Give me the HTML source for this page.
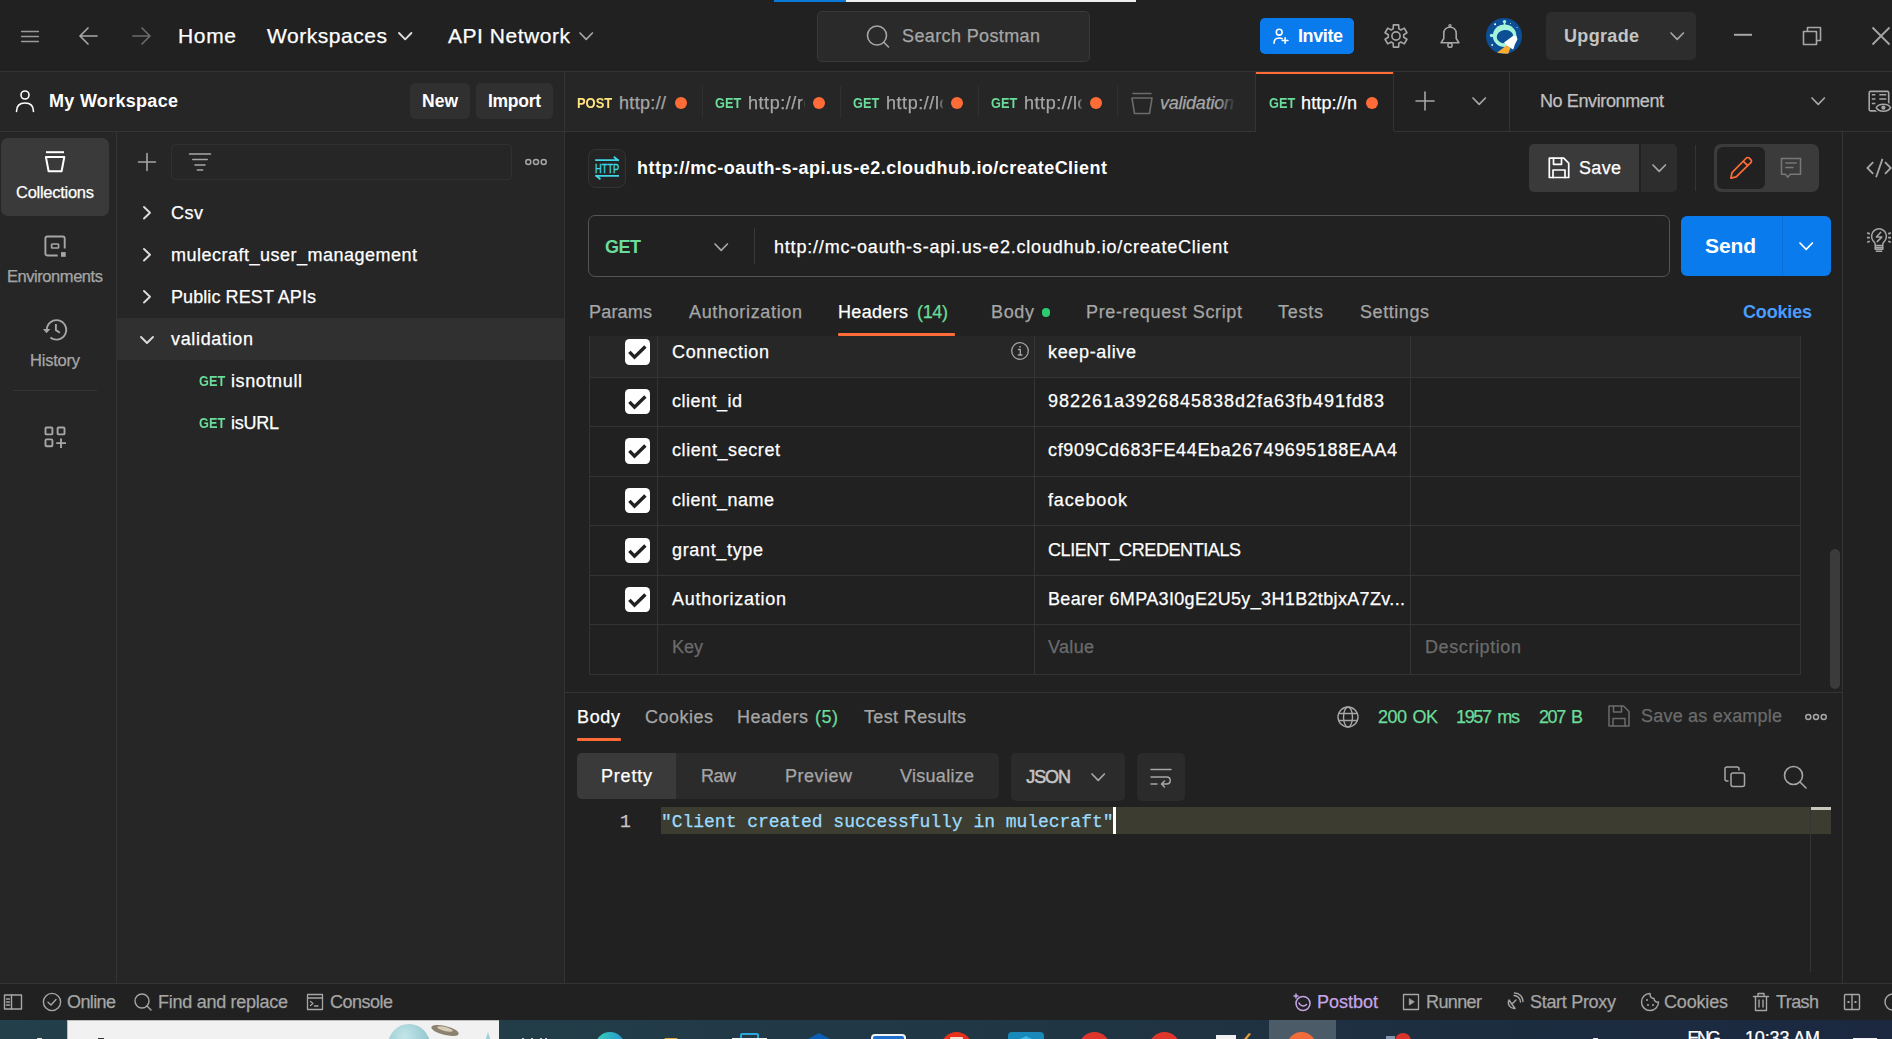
<!DOCTYPE html>
<html lang="en"><head><meta charset="utf-8"><title>Postman</title><style>
html,body{margin:0;padding:0;background:#212121;}
body{width:1892px;height:1039px;overflow:hidden;position:relative;font-family:'Liberation Sans',sans-serif;}
.b{position:absolute;box-sizing:border-box;display:block;}
.t{position:absolute;white-space:pre;line-height:30px;height:30px;-webkit-text-stroke:0.25px currentColor;}
</style></head><body>
<div class="b" style="left:0px;top:0px;width:1892px;height:71px;background:#212121;"></div>
<div class="b" style="left:0px;top:72px;width:1255px;height:59px;background:#262626;"></div>
<div class="b" style="left:0px;top:131px;width:564px;height:853px;background:#262626;"></div>
<div class="b" style="left:1394px;top:72px;width:498px;height:59px;background:#212121;"></div>
<div class="b" style="left:0px;top:71px;width:1892px;height:1px;background:#343434;"></div>
<div class="b" style="left:0px;top:131px;width:1892px;height:1px;background:#343434;"></div>
<div class="b" style="left:116px;top:132px;width:1px;height:851px;background:#343434;"></div>
<div class="b" style="left:564px;top:72px;width:1px;height:911px;background:#343434;"></div>
<div class="b" style="left:774px;top:0px;width:72px;height:2px;background:#0b79d8;"></div>
<div class="b" style="left:846px;top:0px;width:290px;height:2px;background:#ededed;"></div>
<svg class="b" style="left:19px;top:28px;" width="22" height="16" viewBox="0 0 22 16" fill="none" stroke-linecap="round" stroke-linejoin="round"><path d="M2.6 3.5H19.4M2.6 8.5H19.4M2.6 13.5H19.4" stroke="#9a9a9a" stroke-width="1.5"/></svg>
<svg class="b" style="left:77px;top:26px;" width="22" height="20" viewBox="0 0 22 20" fill="none" stroke-linecap="round" stroke-linejoin="round"><path d="M20 10H3M11 2L3 10L11 18" stroke="#a6a6a6" stroke-width="1.7"/></svg>
<svg class="b" style="left:131px;top:26px;" width="22" height="20" viewBox="0 0 22 20" fill="none" stroke-linecap="round" stroke-linejoin="round"><path d="M2 10H19M11 2L19 10L11 18" stroke="#6b6b6b" stroke-width="1.7"/></svg>
<span class="t" style="left:178px;top:20.5px;font-size:21px;color:#fff;letter-spacing:0.656px;">Home</span>
<span class="t" style="left:267px;top:20.5px;font-size:21px;color:#fff;letter-spacing:0.538px;">Workspaces</span>
<svg class="b" style="left:397.3px;top:31.35px;" width="16.4" height="10.3" viewBox="0 0 16.4 10.3" fill="none" stroke-linecap="round" stroke-linejoin="round"><path d="M2 2 L8.2 8.3 L14.4 2" stroke="#dcdcdc" stroke-width="1.9"/></svg>
<span class="t" style="left:448px;top:20.5px;font-size:21px;color:#fff;letter-spacing:0.530px;">API Network</span>
<svg class="b" style="left:578.3px;top:31.35px;" width="16.4" height="10.3" viewBox="0 0 16.4 10.3" fill="none" stroke-linecap="round" stroke-linejoin="round"><path d="M2 2 L8.2 8.3 L14.4 2" stroke="#a6a6a6" stroke-width="1.7"/></svg>
<div class="b" style="left:817px;top:11px;width:273px;height:51px;background:#2a2a2a;border:1px solid #3a3a3a;border-radius:5px;"></div>
<svg class="b" style="left:864px;top:23px;" width="28" height="28" viewBox="0 0 28 28" fill="none" stroke-linecap="round" stroke-linejoin="round"><circle cx="13" cy="12.5" r="9.5" stroke="#a6a6a6" stroke-width="1.6"/><path d="M20 19.5L24.5 24" stroke="#a6a6a6" stroke-width="1.6"/></svg>
<span class="t" style="left:902px;top:20.5px;font-size:18px;color:#a6a6a6;letter-spacing:0.379px;">Search Postman</span>
<div class="b" style="left:1260px;top:18px;width:94px;height:36px;background:#097bed;border-radius:5px;"></div>
<svg class="b" style="left:1271px;top:26px;" width="20" height="20" viewBox="0 0 20 20" fill="none" stroke-linecap="round" stroke-linejoin="round"><circle cx="8.200" cy="6.200" r="2.900" stroke="#fff" stroke-width="1.600"/><path d="M3 17.200C3 13.600 5 12 8.200 12C9.500 12 10.300 12.200 11.200 12.700M14.100 11.700V17.300M11.300 14.500H16.900" stroke="#fff" stroke-width="1.600"/></svg>
<span class="t" style="left:1298px;top:20.5px;font-size:18px;color:#fff;font-weight:700;-webkit-text-stroke:0;letter-spacing:-0.403px;">Invite</span>
<svg class="b" style="left:1384px;top:24px;" width="24" height="24" viewBox="0 0 24 24" fill="none" stroke-linecap="round" stroke-linejoin="round"><circle cx="12" cy="12" r="4.1" stroke="#a6a6a6" stroke-width="1.6"/><path d="M9.20 4.72L9.34 0.91L14.66 0.91L14.80 4.72L16.91 5.94L20.27 4.15L22.93 8.76L19.70 10.78L19.70 13.22L22.93 15.24L20.27 19.85L16.91 18.06L14.80 19.28L14.66 23.09L9.34 23.09L9.20 19.28L7.09 18.06L3.73 19.85L1.07 15.24L4.30 13.22L4.30 10.78L1.07 8.76L3.73 4.15L7.09 5.94Z" stroke="#a6a6a6" stroke-width="1.6" stroke-linejoin="round"/></svg>
<svg class="b" style="left:1438px;top:22px;" width="24" height="28" viewBox="0 0 24 28" fill="none" stroke-linecap="round" stroke-linejoin="round"><path d="M3.100 20.800L5.800 16.500V11.500C5.800 7.500 8.500 5.200 12 5.200C15.500 5.200 18.200 7.500 18.200 11.500V16.500L20.900 20.800Z" stroke="#a6a6a6" stroke-width="1.600"/><circle cx="12" cy="3.700" r="1.100" stroke="#a6a6a6" stroke-width="1.300"/><circle cx="12" cy="23.200" r="2.100" stroke="#a6a6a6" stroke-width="1.500"/></svg>
<svg class="b" style="left:1486px;top:18px;" width="36" height="36" viewBox="0 0 36 36" fill="none" stroke-linecap="round" stroke-linejoin="round"><defs><clipPath id="avc"><circle cx="18" cy="18" r="18"/></clipPath></defs><g clip-path="url(#avc)" stroke="none"><rect width="36" height="36" fill="#0c4f96"/><circle cx="18.5" cy="3.6" r="1.7" fill="#a6f3dc"/><rect x="17.7" y="4" width="1.6" height="3" fill="#a6f3dc"/><circle cx="5.6" cy="17.5" r="1.8" fill="#a6f3dc"/><ellipse cx="18.6" cy="17.8" rx="11.8" ry="11.3" fill="#a6f3dc"/><ellipse cx="19" cy="18.6" rx="8.3" ry="6.6" fill="#0c4f96" transform="rotate(-8 19 18.6)"/><path d="M20.7 27.2L24.5 29.9L22.1 36L11 34.8Z" fill="#ffad2c"/><path d="M18 24.5L27.5 17.5L30.4 18L31.5 21.300L28.8 26.700L27.2 31.500L24.500 29.900L20.700 27.200Z" fill="#fff"/><circle cx="9.1" cy="6.2" r="1" fill="#fff"/><circle cx="6.2" cy="26.9" r="0.9" fill="#fff"/><circle cx="24.5" cy="5.500" r="0.500" fill="#cfe"/><circle cx="31" cy="9.500" r="0.500" fill="#cfe"/></g></svg>
<div class="b" style="left:1546px;top:12px;width:150px;height:48px;background:#2d2d2d;border-radius:5px;"></div>
<span class="t" style="left:1564px;top:20.5px;font-size:18px;color:#c4c4c4;font-weight:700;-webkit-text-stroke:0;letter-spacing:0.331px;">Upgrade</span>
<svg class="b" style="left:1668.8px;top:31.35px;" width="16.4" height="10.3" viewBox="0 0 16.4 10.3" fill="none" stroke-linecap="round" stroke-linejoin="round"><path d="M2 2 L8.2 8.3 L14.4 2" stroke="#a6a6a6" stroke-width="1.7"/></svg>
<svg class="b" style="left:1731px;top:31px;" width="24" height="8" viewBox="0 0 24 8" fill="none" stroke-linecap="round" stroke-linejoin="round"><path d="M3 3.800H21" stroke="#a6a6a6" stroke-width="2" stroke-linecap="butt"/></svg>
<svg class="b" style="left:1801px;top:25px;" width="22" height="22" viewBox="0 0 22 22" fill="none" stroke-linecap="round" stroke-linejoin="round"><path d="M6.5 6V2.5H19.5V15.5H16" stroke="#a6a6a6" stroke-width="1.6"/><rect x="2.5" y="6.5" width="13" height="13" stroke="#a6a6a6" stroke-width="1.6"/></svg>
<svg class="b" style="left:1871px;top:26px;" width="22" height="20" viewBox="0 0 22 20" fill="none" stroke-linecap="round" stroke-linejoin="round"><path d="M1.500 1.500L18.500 18.500M18.500 1.500L1.500 18.500" stroke="#a6a6a6" stroke-width="1.800" stroke-linecap="butt"/></svg>
<svg class="b" style="left:14px;top:88px;" width="22" height="26" viewBox="0 0 22 26" fill="none" stroke-linecap="round" stroke-linejoin="round"><circle cx="11" cy="7" r="4" stroke="#fff" stroke-width="1.6"/><path d="M2.5 23.5C2.5 17.5 6 15 11 15C16 15 19.5 17.5 19.5 23.5" stroke="#fff" stroke-width="1.6"/></svg>
<span class="t" style="left:49px;top:85.5px;font-size:18px;color:#fff;font-weight:700;-webkit-text-stroke:0;letter-spacing:0.298px;">My Workspace</span>
<div class="b" style="left:410px;top:83px;width:60px;height:36px;background:#303030;border-radius:5px;"></div>
<span class="t" style="left:422px;top:86.1px;font-size:17.5px;color:#fff;font-weight:700;-webkit-text-stroke:0;letter-spacing:0.008px;">New</span>
<div class="b" style="left:476px;top:83px;width:77px;height:36px;background:#303030;border-radius:5px;"></div>
<span class="t" style="left:488px;top:86.1px;font-size:17.5px;color:#fff;font-weight:700;-webkit-text-stroke:0;letter-spacing:-0.291px;">Import</span>
<span class="t" style="left:577px;top:88.1px;font-size:14.4px;color:#ffe47e;font-weight:700;-webkit-text-stroke:0;transform:scaleX(0.8982);transform-origin:0 50%;">POST</span>
<span class="t" style="left:619px;top:87.5px;font-size:18px;color:#a6a6a6;letter-spacing:0.328px;">http://</span>
<div class="b" style="left:674.8px;top:96.8px;width:12.4px;height:12.4px;background:#ff6c37;border-radius:50%;"></div>
<div class="b" style="left:702px;top:86px;width:1px;height:32px;background:#303030;"></div>
<span class="t" style="left:715px;top:88.1px;font-size:14.4px;color:#6bdd9a;font-weight:700;-webkit-text-stroke:0;transform:scaleX(0.8853);transform-origin:0 50%;">GET</span>
<span class="t" style="left:748px;top:87.5px;font-size:18px;color:#a6a6a6;letter-spacing:0.55px;display:block;overflow:hidden;width:57px;-webkit-mask-image:linear-gradient(90deg,#000 93%,transparent 102%);mask-image:linear-gradient(90deg,#000 93%,transparent 102%);">http://re</span>
<div class="b" style="left:812.8px;top:96.8px;width:12.4px;height:12.4px;background:#ff6c37;border-radius:50%;"></div>
<div class="b" style="left:840px;top:86px;width:1px;height:32px;background:#303030;"></div>
<span class="t" style="left:853px;top:88.1px;font-size:14.4px;color:#6bdd9a;font-weight:700;-webkit-text-stroke:0;transform:scaleX(0.8853);transform-origin:0 50%;">GET</span>
<span class="t" style="left:886px;top:87.5px;font-size:18px;color:#a6a6a6;letter-spacing:0.55px;display:block;overflow:hidden;width:57px;-webkit-mask-image:linear-gradient(90deg,#000 93%,transparent 102%);mask-image:linear-gradient(90deg,#000 93%,transparent 102%);">http://lo</span>
<div class="b" style="left:950.8px;top:96.8px;width:12.4px;height:12.4px;background:#ff6c37;border-radius:50%;"></div>
<div class="b" style="left:978px;top:86px;width:1px;height:32px;background:#303030;"></div>
<span class="t" style="left:991px;top:88.1px;font-size:14.4px;color:#6bdd9a;font-weight:700;-webkit-text-stroke:0;transform:scaleX(0.8853);transform-origin:0 50%;">GET</span>
<span class="t" style="left:1024px;top:87.5px;font-size:18px;color:#a6a6a6;letter-spacing:0.55px;display:block;overflow:hidden;width:58px;-webkit-mask-image:linear-gradient(90deg,#000 93%,transparent 102%);mask-image:linear-gradient(90deg,#000 93%,transparent 102%);">http://lo</span>
<div class="b" style="left:1089.8px;top:96.8px;width:12.4px;height:12.4px;background:#ff6c37;border-radius:50%;"></div>
<div class="b" style="left:1117px;top:86px;width:1px;height:32px;background:#303030;"></div>
<svg class="b" style="left:1129px;top:90px;" width="26" height="26" viewBox="0 0 26 26" fill="none" stroke-linecap="round" stroke-linejoin="round"><path d="M4 3.5H22M3 8H23L20.5 23.5H5.5Z" stroke="#6b6b6b" stroke-width="1.6"/></svg>
<span class="t" style="left:1160px;top:87.5px;font-size:18px;color:#a6a6a6;font-style:italic;letter-spacing:-0.229px;">validation</span>
<div class="b" style="left:1218px;top:88px;width:18px;height:30px;background:linear-gradient(90deg,rgba(38,38,38,0),#262626)"></div>
<div class="b" style="left:1256px;top:72px;width:138px;height:60px;background:#212121;"></div>
<div class="b" style="left:1256px;top:72px;width:137px;height:2px;background:#ff6c37;"></div>
<div class="b" style="left:1255px;top:72px;width:1px;height:59px;background:#343434;"></div>
<div class="b" style="left:1393px;top:72px;width:1px;height:59px;background:#343434;"></div>
<span class="t" style="left:1268.8px;top:88.1px;font-size:14.4px;color:#6bdd9a;font-weight:700;-webkit-text-stroke:0;transform:scaleX(0.8853);transform-origin:0 50%;">GET</span>
<span class="t" style="left:1301px;top:87.5px;font-size:18px;color:#fff;letter-spacing:0.136px;">http://n</span>
<div class="b" style="left:1365.8px;top:96.8px;width:12.4px;height:12.4px;background:#ff6c37;border-radius:50%;"></div>
<svg class="b" style="left:1415px;top:91px;" width="20" height="20" viewBox="0 0 20 20" fill="none" stroke-linecap="round" stroke-linejoin="round"><path d="M10 1V19M1 10H19" stroke="#a6a6a6" stroke-width="1.6"/></svg>
<svg class="b" style="left:1470.8px;top:96.35px;" width="16.4" height="10.3" viewBox="0 0 16.4 10.3" fill="none" stroke-linecap="round" stroke-linejoin="round"><path d="M2 2 L8.2 8.3 L14.4 2" stroke="#a6a6a6" stroke-width="1.7"/></svg>
<div class="b" style="left:1509px;top:72px;width:1px;height:59px;background:#343434;"></div>
<span class="t" style="left:1540px;top:85.5px;font-size:18px;color:#c0c0c0;letter-spacing:-0.389px;">No Environment</span>
<svg class="b" style="left:1809.8px;top:96.35px;" width="16.4" height="10.3" viewBox="0 0 16.4 10.3" fill="none" stroke-linecap="round" stroke-linejoin="round"><path d="M2 2 L8.2 8.3 L14.4 2" stroke="#a6a6a6" stroke-width="1.7"/></svg>
<svg class="b" style="left:1866px;top:88px;" width="28" height="28" viewBox="0 0 28 28" fill="none" stroke-linecap="round" stroke-linejoin="round"><rect x="3.200" y="3.400" width="19.500" height="19.500" rx="1.300" stroke="#a6a6a6" stroke-width="1.600"/><path d="M5.800 6.800H9.400M13.300 6.800H20.300M5.800 11.100H9.400M13.300 11.100H20.300M5.800 15.400H9.400" stroke="#a6a6a6" stroke-width="1.500" stroke-linecap="butt"/><path d="M10.200 19.700C12.500 15 22.300 15 24.600 19.700C22.300 24.400 12.500 24.400 10.200 19.700Z" fill="#212121" stroke="#212121" stroke-width="4"/><path d="M10.200 19.700C12.500 15 22.300 15 24.600 19.700C22.300 24.400 12.500 24.400 10.200 19.700Z" stroke="#a6a6a6" stroke-width="1.500"/><circle cx="17.400" cy="19.700" r="2.100" fill="#a6a6a6" stroke="none"/></svg>
<div class="b" style="left:1px;top:138px;width:108px;height:78px;background:#3a3a3a;border-radius:7px;"></div>
<svg class="b" style="left:42px;top:149px;" width="26" height="26" viewBox="0 0 26 26" fill="none" stroke-linecap="round" stroke-linejoin="round"><path d="M3.900 8H22.300L19.600 22.300H6.600Z" stroke="#fff" stroke-width="2"/><path d="M4 3.200H22" stroke="#fff" stroke-width="2" stroke-linecap="butt"/></svg>
<span class="t" style="left:16px;top:177.2px;font-size:16.5px;color:#fff;letter-spacing:-0.272px;">Collections</span>
<svg class="b" style="left:42px;top:233px;" width="26" height="26" viewBox="0 0 26 26" fill="none" stroke-linecap="round" stroke-linejoin="round"><path d="M22.700 15.600V5.500Q22.700 3.500 20.700 3.500H5.400Q3.400 3.500 3.400 5.500V20.500Q3.400 22.500 5.400 22.500H15.700" stroke="#a6a6a6" stroke-width="1.900" stroke-linecap="butt"/><rect x="9.600" y="11" width="7" height="4" rx="0.800" stroke="#a6a6a6" stroke-width="1.700"/><rect x="19" y="19.100" width="4.700" height="4.700" fill="#a6a6a6" stroke="none"/></svg>
<span class="t" style="left:7px;top:261.2px;font-size:16.5px;color:#a6a6a6;letter-spacing:-0.445px;">Environments</span>
<svg class="b" style="left:42px;top:317px;" width="26" height="26" viewBox="0 0 26 26" fill="none" stroke-linecap="round" stroke-linejoin="round"><path d="M4.800 12.900A9.700 9.700 0 1 1 8.400 20.400" stroke="#a6a6a6" stroke-width="1.900" stroke-linecap="butt"/><path d="M1 12.100H8.400L4.500 16.300Z" fill="#a6a6a6" stroke="none"/><path d="M13.900 7.100V13.100L17.900 15.700" stroke="#a6a6a6" stroke-width="1.900" stroke-linecap="butt"/></svg>
<span class="t" style="left:30px;top:345.2px;font-size:16.5px;color:#a6a6a6;letter-spacing:-0.224px;">History</span>
<div class="b" style="left:13px;top:390px;width:84px;height:1px;background:#343434;"></div>
<svg class="b" style="left:43px;top:426px;" width="26" height="26" viewBox="0 0 26 26" fill="none" stroke-linecap="round" stroke-linejoin="round"><rect x="2.500" y="1.500" width="6.900" height="6.900" rx="1" stroke="#a6a6a6" stroke-width="1.900"/><rect x="14.600" y="1.500" width="6.900" height="6.900" rx="1" stroke="#a6a6a6" stroke-width="1.900"/><rect x="2.500" y="13.400" width="6.900" height="6.900" rx="1" stroke="#a6a6a6" stroke-width="1.900"/><path d="M18 12.400V22M13.200 17.100H23" stroke="#a6a6a6" stroke-width="1.900" stroke-linecap="butt"/></svg>
<svg class="b" style="left:137px;top:152px;" width="20" height="20" viewBox="0 0 20 20" fill="none" stroke-linecap="round" stroke-linejoin="round"><path d="M10 1.5V18.5M1.5 10H18.5" stroke="#a6a6a6" stroke-width="1.6"/></svg>
<div class="b" style="left:171px;top:144px;width:341px;height:36px;border:1px solid #303030;border-radius:4px;"></div>
<svg class="b" style="left:188px;top:152px;" width="24" height="20" viewBox="0 0 24 20" fill="none" stroke-linecap="round" stroke-linejoin="round"><path d="M1.5 2H22.5M4.8 7.5H19.2M7 13H17M9.3 18H14.7" stroke="#a6a6a6" stroke-width="1.6"/></svg>
<svg class="b" style="left:524px;top:157px;" width="24" height="10" viewBox="0 0 24 10" fill="none" stroke-linecap="round" stroke-linejoin="round"><circle cx="4.3" cy="5" r="2.5" stroke="#a6a6a6" stroke-width="1.5"/><circle cx="12" cy="5" r="2.5" stroke="#a6a6a6" stroke-width="1.5"/><circle cx="19.7" cy="5" r="2.5" stroke="#a6a6a6" stroke-width="1.5"/></svg>
<div class="b" style="left:117px;top:318px;width:447px;height:42px;background:#303030;"></div>
<svg class="b" style="left:142.3px;top:205.25px;" width="10" height="15.5" viewBox="0 0 10 15.5" fill="none" stroke-linecap="round" stroke-linejoin="round"><path d="M2 2 L8 7.75 L2 13.5" stroke="#dcdcdc" stroke-width="1.9"/></svg>
<span class="t" style="left:171px;top:198.0px;font-size:18px;color:#fff;letter-spacing:0.500px;">Csv</span>
<svg class="b" style="left:142.3px;top:247.25px;" width="10" height="15.5" viewBox="0 0 10 15.5" fill="none" stroke-linecap="round" stroke-linejoin="round"><path d="M2 2 L8 7.75 L2 13.5" stroke="#dcdcdc" stroke-width="1.9"/></svg>
<span class="t" style="left:171px;top:240.0px;font-size:18px;color:#fff;letter-spacing:0.495px;">mulecraft_user_management</span>
<svg class="b" style="left:142.3px;top:289.25px;" width="10" height="15.5" viewBox="0 0 10 15.5" fill="none" stroke-linecap="round" stroke-linejoin="round"><path d="M2 2 L8 7.75 L2 13.5" stroke="#dcdcdc" stroke-width="1.9"/></svg>
<span class="t" style="left:171px;top:282.0px;font-size:18px;color:#fff;letter-spacing:0.084px;">Public REST APIs</span>
<svg class="b" style="left:139.0px;top:334.5px;" width="16" height="10" viewBox="0 0 16 10" fill="none" stroke-linecap="round" stroke-linejoin="round"><path d="M2 2 L8.0 8 L14 2" stroke="#dcdcdc" stroke-width="1.9"/></svg>
<span class="t" style="left:171px;top:324.0px;font-size:18px;color:#fff;letter-spacing:0.660px;">validation</span>
<span class="t" style="left:199px;top:365.9px;font-size:14.4px;color:#6bdd9a;font-weight:700;-webkit-text-stroke:0;transform:scaleX(0.8853);transform-origin:0 50%;">GET</span>
<span class="t" style="left:231px;top:366.0px;font-size:18px;color:#fff;letter-spacing:0.619px;">isnotnull</span>
<span class="t" style="left:199px;top:407.9px;font-size:14.4px;color:#6bdd9a;font-weight:700;-webkit-text-stroke:0;transform:scaleX(0.8853);transform-origin:0 50%;">GET</span>
<span class="t" style="left:231px;top:408.0px;font-size:18px;color:#fff;letter-spacing:-0.254px;">isURL</span>
<div class="b" style="left:588px;top:148.6px;width:38px;height:39px;background:#242424;border:1px solid #343434;border-radius:8px;"></div>
<svg class="b" style="left:592px;top:153px;" width="31" height="30" viewBox="0 0 31 30" fill="none" stroke-linecap="round" stroke-linejoin="round"><path d="M3.200 7.200H27M26.600 7.800L21.800 3.800M27 22.800H3.200M3.600 22.200L8.400 26.200" stroke="#3fd6ea" stroke-width="1.800" stroke-linecap="butt" stroke-linejoin="miter"/><text x="3" y="19.800" font-family="Liberation Sans, sans-serif" font-size="13" fill="#3fd6ea" stroke="#3fd6ea" stroke-width="0.400" textLength="24.300" lengthAdjust="spacingAndGlyphs">HTTP</text></svg>
<span class="t" style="left:637px;top:153.0px;font-size:18px;color:#fff;font-weight:700;-webkit-text-stroke:0;letter-spacing:0.470px;">http://mc-oauth-s-api.us-e2.cloudhub.io/createClient</span>
<div class="b" style="left:1529px;top:144px;width:110px;height:48px;background:#3a3a3a;border-radius:5px 0 0 5px;"></div>
<div class="b" style="left:1641px;top:144px;width:36px;height:48px;background:#2d2d2d;border-radius:0 5px 5px 0;"></div>
<svg class="b" style="left:1546px;top:155px;" width="26" height="26" viewBox="0 0 26 26" fill="none" stroke-linecap="round" stroke-linejoin="round"><path d="M3.300 3.200H17.700L22.700 8.200V22.500H3.300Z" stroke="#fff" stroke-width="1.700"/><path d="M7.500 3.200V9.300H15.500V3.200M7 22.500V15H19V22.500" stroke="#fff" stroke-width="1.700"/></svg>
<span class="t" style="left:1579px;top:153.0px;font-size:18px;color:#fff;letter-spacing:0.323px;">Save</span>
<svg class="b" style="left:1650.8px;top:162.85px;" width="16.4" height="10.3" viewBox="0 0 16.4 10.3" fill="none" stroke-linecap="round" stroke-linejoin="round"><path d="M2 2 L8.2 8.3 L14.4 2" stroke="#a6a6a6" stroke-width="1.7"/></svg>
<div class="b" style="left:1695px;top:145px;width:1px;height:46px;background:#343434;"></div>
<div class="b" style="left:1714px;top:144px;width:105px;height:48px;background:#3b3b3b;border-radius:7px;"></div>
<div class="b" style="left:1717px;top:147px;width:48px;height:42px;background:#212121;border-radius:6px;"></div>
<svg class="b" style="left:1728px;top:155px;" width="26" height="26" viewBox="0 0 26 26" fill="none" stroke-linecap="round" stroke-linejoin="round"><path d="M2.800 23.100L4 17.700L17.900 3.500C18.900 2.300 20.300 2.200 21.300 3.200L22.800 4.700C23.800 5.700 23.700 7 22.750 7.700L8.200 21.800ZM15.800 6.900L19.200 10" stroke="#ff6c37" stroke-width="1.700"/></svg>
<svg class="b" style="left:1778px;top:156px;" width="26" height="26" viewBox="0 0 26 26" fill="none" stroke-linecap="round" stroke-linejoin="round"><path d="M3.500 2.500H22.500V18.200H12.300L9.800 21L7.300 18.200H3.500Z" stroke="#777" stroke-width="1.500" stroke-linejoin="miter"/><path d="M7.300 7H18.700M7.300 11.400H15.700" stroke="#777" stroke-width="1.500" stroke-linecap="butt"/></svg>
<div class="b" style="left:1842px;top:132px;width:1px;height:851px;background:#343434;"></div>
<svg class="b" style="left:1866px;top:157px;" width="26" height="22" viewBox="0 0 26 22" fill="none" stroke-linecap="round" stroke-linejoin="round"><path d="M7.200 5.100L1.400 11L7.200 16.900M16.500 1.900L10.100 20.200M19 5.100L24.800 11L19 16.900" stroke="#a6a6a6" stroke-width="1.800" stroke-linecap="butt" stroke-linejoin="miter"/></svg>
<div class="b" style="left:588px;top:215px;width:1082px;height:62px;background:#212121;border:1px solid #555;border-radius:7px;"></div>
<span class="t" style="left:605px;top:231.7px;font-size:18px;color:#6bdd9a;font-weight:700;-webkit-text-stroke:0;letter-spacing:-0.508px;">GET</span>
<svg class="b" style="left:713.0px;top:241.65px;" width="16.4" height="10.3" viewBox="0 0 16.4 10.3" fill="none" stroke-linecap="round" stroke-linejoin="round"><path d="M2 2 L8.2 8.3 L14.4 2" stroke="#a6a6a6" stroke-width="1.7"/></svg>
<div class="b" style="left:754px;top:228px;width:1px;height:36px;background:#3a3a3a;"></div>
<span class="t" style="left:774px;top:231.7px;font-size:18px;color:#fff;letter-spacing:0.800px;">http://mc-oauth-s-api.us-e2.cloudhub.io/createClient</span>
<div class="b" style="left:1681px;top:216px;width:150px;height:60px;background:#097bed;border-radius:6px;"></div>
<span class="t" style="left:1705px;top:230.6px;font-size:21px;color:#fff;font-weight:700;-webkit-text-stroke:0;letter-spacing:-0.115px;">Send</span>
<div class="b" style="left:1782px;top:216px;width:1px;height:60px;background:#0a6fd6;"></div>
<svg class="b" style="left:1798.3px;top:240.85px;" width="16.4" height="10.3" viewBox="0 0 16.4 10.3" fill="none" stroke-linecap="round" stroke-linejoin="round"><path d="M2 2 L8.2 8.3 L14.4 2" stroke="#fff" stroke-width="1.7"/></svg>
<svg class="b" style="left:1864px;top:226px;" width="28" height="30" viewBox="0 0 28 30" fill="none" stroke-linecap="round" stroke-linejoin="round"><path d="M11.200 19.500V18.200C11.200 16.600 9.600 15.600 8.800 14.300A7.400 7.400 0 1 1 21.200 14.300C20.400 15.600 18.800 16.600 18.800 18.200V19.500M11.200 19.500H18.800M11.200 19.500V23.300H18.800V19.500M11.200 21.500H18.800M12.300 25.200H17.700" stroke="#a6a6a6" stroke-width="1.500"/><path d="M16.700 6.300L12.400 10.900L17.800 11.100L13.200 15.600" stroke="#a6a6a6" stroke-width="1.500"/><path d="M3.200 6.900L5.800 7.900M3 11.700H5.900M3.200 16.300L5.800 15.300M26.800 6.900L24.200 7.900M27 11.700H24.100M26.800 16.300L24.200 15.300" stroke="#a6a6a6" stroke-width="1.700" stroke-linecap="butt"/></svg>
<span class="t" style="left:589px;top:296.7px;font-size:18px;color:#a6a6a6;letter-spacing:0.197px;">Params</span>
<span class="t" style="left:689px;top:296.7px;font-size:18px;color:#a6a6a6;letter-spacing:0.660px;">Authorization</span>
<span class="t" style="left:838px;top:296.7px;font-size:18px;color:#fff;letter-spacing:0.326px;">Headers</span>
<span class="t" style="left:917px;top:296.7px;font-size:18px;color:#6bdd9a;letter-spacing:-0.339px;">(14)</span>
<div class="b" style="left:838px;top:333px;width:117px;height:3px;background:#ff6c37;border-radius:1px;"></div>
<span class="t" style="left:991px;top:296.7px;font-size:18px;color:#a6a6a6;letter-spacing:0.656px;">Body</span>
<div class="b" style="left:1041.7px;top:308.2px;width:8.6px;height:8.6px;background:#2ecc71;border-radius:50%;"></div>
<span class="t" style="left:1086px;top:296.7px;font-size:18px;color:#a6a6a6;letter-spacing:0.643px;">Pre-request Script</span>
<span class="t" style="left:1278px;top:296.7px;font-size:18px;color:#a6a6a6;letter-spacing:0.746px;">Tests</span>
<span class="t" style="left:1360px;top:296.7px;font-size:18px;color:#a6a6a6;letter-spacing:0.565px;">Settings</span>
<span class="t" style="left:1743px;top:296.7px;font-size:18px;color:#4a9dff;font-weight:700;-webkit-text-stroke:0;letter-spacing:-0.172px;">Cookies</span>
<div class="b" style="left:589px;top:336px;width:1212px;height:41px;background:#272727;"></div>
<div class="b" style="left:589px;top:336px;width:1px;height:339px;background:#343434;"></div>
<div class="b" style="left:589px;top:377px;width:1212px;height:1px;background:#343434;"></div>
<div class="b" style="left:589px;top:426px;width:1212px;height:1px;background:#343434;"></div>
<div class="b" style="left:589px;top:476px;width:1212px;height:1px;background:#343434;"></div>
<div class="b" style="left:589px;top:525px;width:1212px;height:1px;background:#343434;"></div>
<div class="b" style="left:589px;top:575px;width:1212px;height:1px;background:#343434;"></div>
<div class="b" style="left:589px;top:624px;width:1212px;height:1px;background:#343434;"></div>
<div class="b" style="left:589px;top:674px;width:1212px;height:1px;background:#343434;"></div>
<div class="b" style="left:657px;top:336px;width:1px;height:339px;background:#343434;"></div>
<div class="b" style="left:1034px;top:336px;width:1px;height:339px;background:#343434;"></div>
<div class="b" style="left:1410px;top:336px;width:1px;height:339px;background:#343434;"></div>
<div class="b" style="left:1800px;top:336px;width:1px;height:339px;background:#343434;"></div>
<div class="b" style="left:624.6px;top:339.34999999999997px;width:25.8px;height:25.6px;background:#fff;border-radius:4.5px;"></div>
<svg class="b" style="left:624.6px;top:339.34999999999997px;" width="27" height="27" viewBox="0 0 27 27" fill="none" stroke-linecap="round" stroke-linejoin="round"><path d="M4.400 12.900L9.500 18.200L20.400 7.500" stroke="#212121" stroke-width="3.400" stroke-linecap="butt" stroke-linejoin="miter"/></svg>
<span class="t" style="left:672px;top:336.5px;font-size:18px;color:#fff;letter-spacing:0.658px;">Connection</span>
<span class="t" style="left:1048px;top:336.5px;font-size:18px;color:#fff;letter-spacing:0.661px;">keep-alive</span>
<div class="b" style="left:624.6px;top:388.59999999999997px;width:25.8px;height:25.6px;background:#fff;border-radius:4.5px;"></div>
<svg class="b" style="left:624.6px;top:388.59999999999997px;" width="27" height="27" viewBox="0 0 27 27" fill="none" stroke-linecap="round" stroke-linejoin="round"><path d="M4.400 12.900L9.500 18.200L20.400 7.500" stroke="#212121" stroke-width="3.400" stroke-linecap="butt" stroke-linejoin="miter"/></svg>
<span class="t" style="left:672px;top:385.75px;font-size:18px;color:#fff;letter-spacing:0.494px;">client_id</span>
<span class="t" style="left:1048px;top:385.75px;font-size:18px;color:#fff;letter-spacing:0.989px;">982261a3926845838d2fa63fb491fd83</span>
<div class="b" style="left:624.6px;top:438.09999999999997px;width:25.8px;height:25.6px;background:#fff;border-radius:4.5px;"></div>
<svg class="b" style="left:624.6px;top:438.09999999999997px;" width="27" height="27" viewBox="0 0 27 27" fill="none" stroke-linecap="round" stroke-linejoin="round"><path d="M4.400 12.900L9.500 18.200L20.400 7.500" stroke="#212121" stroke-width="3.400" stroke-linecap="butt" stroke-linejoin="miter"/></svg>
<span class="t" style="left:672px;top:435.25px;font-size:18px;color:#fff;letter-spacing:0.578px;">client_secret</span>
<span class="t" style="left:1048px;top:435.25px;font-size:18px;color:#fff;letter-spacing:0.668px;">cf909Cd683FE44Eba26749695188EAA4</span>
<div class="b" style="left:624.6px;top:487.59999999999997px;width:25.8px;height:25.6px;background:#fff;border-radius:4.5px;"></div>
<svg class="b" style="left:624.6px;top:487.59999999999997px;" width="27" height="27" viewBox="0 0 27 27" fill="none" stroke-linecap="round" stroke-linejoin="round"><path d="M4.400 12.900L9.500 18.200L20.400 7.500" stroke="#212121" stroke-width="3.400" stroke-linecap="butt" stroke-linejoin="miter"/></svg>
<span class="t" style="left:672px;top:484.75px;font-size:18px;color:#fff;letter-spacing:0.494px;">client_name</span>
<span class="t" style="left:1048px;top:484.75px;font-size:18px;color:#fff;letter-spacing:0.848px;">facebook</span>
<div class="b" style="left:624.6px;top:537.85px;width:25.8px;height:25.6px;background:#fff;border-radius:4.5px;"></div>
<svg class="b" style="left:624.6px;top:537.85px;" width="27" height="27" viewBox="0 0 27 27" fill="none" stroke-linecap="round" stroke-linejoin="round"><path d="M4.400 12.900L9.500 18.200L20.400 7.500" stroke="#212121" stroke-width="3.400" stroke-linecap="butt" stroke-linejoin="miter"/></svg>
<span class="t" style="left:672px;top:535.0px;font-size:18px;color:#fff;letter-spacing:0.660px;">grant_type</span>
<span class="t" style="left:1048px;top:535.0px;font-size:18px;color:#fff;letter-spacing:-0.415px;">CLIENT_CREDENTIALS</span>
<div class="b" style="left:624.6px;top:586.6px;width:25.8px;height:25.6px;background:#fff;border-radius:4.5px;"></div>
<svg class="b" style="left:624.6px;top:586.6px;" width="27" height="27" viewBox="0 0 27 27" fill="none" stroke-linecap="round" stroke-linejoin="round"><path d="M4.400 12.900L9.500 18.200L20.400 7.500" stroke="#212121" stroke-width="3.400" stroke-linecap="butt" stroke-linejoin="miter"/></svg>
<span class="t" style="left:672px;top:583.75px;font-size:18px;color:#fff;letter-spacing:0.743px;">Authorization</span>
<span class="t" style="left:1048px;top:583.75px;font-size:18px;color:#fff;letter-spacing:0.347px;">Bearer 6MPA3I0gE2U5y_3H1B2tbjxA7Zv...</span>
<svg class="b" style="left:1010px;top:341px;" width="20" height="20" viewBox="0 0 20 20" fill="none" stroke-linecap="round" stroke-linejoin="round"><circle cx="10" cy="10" r="8.300" stroke="#a6a6a6" stroke-width="1.3"/><path d="M8.500 8.500H10.300V14M8.300 14H12" stroke="#a6a6a6" stroke-width="1.3"/><circle cx="10" cy="5.800" r="0.900" fill="#a6a6a6" stroke="none"/></svg>
<span class="t" style="left:672px;top:632.3px;font-size:18px;color:#6b6b6b;letter-spacing:-0.016px;">Key</span>
<span class="t" style="left:1048px;top:632.3px;font-size:18px;color:#6b6b6b;letter-spacing:0.324px;">Value</span>
<span class="t" style="left:1425px;top:632.3px;font-size:18px;color:#6b6b6b;letter-spacing:0.595px;">Description</span>
<div class="b" style="left:1829.5px;top:549px;width:10px;height:139.5px;background:#3b3b3b;border-radius:5px;"></div>
<div class="b" style="left:565px;top:692px;width:1278px;height:1px;background:#343434;"></div>
<span class="t" style="left:577px;top:702.0px;font-size:18px;color:#fff;letter-spacing:0.656px;">Body</span>
<div class="b" style="left:577px;top:738px;width:44px;height:3px;background:#ff6c37;border-radius:1px;"></div>
<span class="t" style="left:645px;top:702.0px;font-size:18px;color:#a6a6a6;letter-spacing:0.495px;">Cookies</span>
<span class="t" style="left:737px;top:702.0px;font-size:18px;color:#a6a6a6;letter-spacing:0.492px;">Headers</span>
<span class="t" style="left:815px;top:702.0px;font-size:18px;color:#6bdd9a;letter-spacing:0.500px;">(5)</span>
<span class="t" style="left:864px;top:702.0px;font-size:18px;color:#a6a6a6;letter-spacing:0.359px;">Test Results</span>
<svg class="b" style="left:1336px;top:705px;" width="24" height="24" viewBox="0 0 24 24" fill="none" stroke-linecap="round" stroke-linejoin="round"><circle cx="12" cy="12" r="10" stroke="#a6a6a6" stroke-width="1.4"/><ellipse cx="12" cy="12" rx="4.500" ry="10" stroke="#a6a6a6" stroke-width="1.4"/><path d="M3 8.500H21M3 15.500H21" stroke="#a6a6a6" stroke-width="1.4"/></svg>
<span class="t" style="left:1378px;top:702.0px;font-size:18px;color:#6bdd9a;letter-spacing:-0.509px;word-spacing:1.5px;">200 OK</span>
<span class="t" style="left:1456px;top:702.0px;font-size:18px;color:#6bdd9a;letter-spacing:-1.341px;word-spacing:3px;">1957 ms</span>
<span class="t" style="left:1539px;top:702.0px;font-size:18px;color:#6bdd9a;letter-spacing:-1.387px;word-spacing:2.5px;">207 B</span>
<svg class="b" style="left:1607px;top:704px;" width="24" height="24" viewBox="0 0 24 24" fill="none" stroke-linecap="round" stroke-linejoin="round"><path d="M2 2H16.500L22 7.500V22H2Z" stroke="#6b6b6b" stroke-width="1.5"/><path d="M6.500 2V8H14.500V2M6 22V14.500H18V22" stroke="#6b6b6b" stroke-width="1.5"/></svg>
<span class="t" style="left:1641px;top:701.0px;font-size:18px;color:#6b6b6b;letter-spacing:0.209px;">Save as example</span>
<svg class="b" style="left:1804px;top:712px;" width="24" height="10" viewBox="0 0 24 10" fill="none" stroke-linecap="round" stroke-linejoin="round"><circle cx="4.3" cy="5" r="2.5" stroke="#a6a6a6" stroke-width="1.5"/><circle cx="12" cy="5" r="2.5" stroke="#a6a6a6" stroke-width="1.5"/><circle cx="19.7" cy="5" r="2.5" stroke="#a6a6a6" stroke-width="1.5"/></svg>
<div class="b" style="left:577px;top:753px;width:422px;height:45.5px;background:#2b2b2b;border-radius:5px;"></div>
<div class="b" style="left:577px;top:753px;width:99px;height:45.5px;background:#3a3a3a;border-radius:5px 0 0 5px;"></div>
<span class="t" style="left:601px;top:761.0px;font-size:18px;color:#fff;letter-spacing:0.797px;">Pretty</span>
<span class="t" style="left:701px;top:761.0px;font-size:18px;color:#a6a6a6;letter-spacing:-0.508px;">Raw</span>
<span class="t" style="left:785px;top:761.0px;font-size:18px;color:#a6a6a6;letter-spacing:0.495px;">Preview</span>
<span class="t" style="left:900px;top:761.0px;font-size:18px;color:#a6a6a6;letter-spacing:0.285px;">Visualize</span>
<div class="b" style="left:1011px;top:753px;width:114px;height:47.5px;background:#2b2b2b;border-radius:5px;"></div>
<span class="t" style="left:1026.3px;top:762.0px;font-size:18px;color:#c4c4c4;letter-spacing:-1.139px;-webkit-text-stroke:0.55px currentColor;">JSON</span>
<svg class="b" style="left:1090.1px;top:772.45px;" width="16.4" height="10.3" viewBox="0 0 16.4 10.3" fill="none" stroke-linecap="round" stroke-linejoin="round"><path d="M2 2 L8.2 8.3 L14.4 2" stroke="#a6a6a6" stroke-width="1.7"/></svg>
<div class="b" style="left:1137px;top:753px;width:48px;height:48px;background:#2b2b2b;border-radius:5px;"></div>
<svg class="b" style="left:1149px;top:765.6px;" width="24" height="24" viewBox="0 0 24 24" fill="none" stroke-linecap="round" stroke-linejoin="round"><path d="M2 3.500H22M2 11H17.500C22.500 11 22.500 18 17.500 18H13M15.500 15L12.500 18L15.500 21M2 18H8" stroke="#a6a6a6" stroke-width="1.5"/></svg>
<svg class="b" style="left:1723px;top:765px;" width="24" height="24" viewBox="0 0 24 24" fill="none" stroke-linecap="round" stroke-linejoin="round"><path d="M6.500 6.500V4C6.500 3 7 2 8.500 2H15.500M2 5.500V15.500" stroke="none"/><rect x="8" y="8" width="13.500" height="13.500" rx="2" stroke="#a6a6a6" stroke-width="1.5"/><path d="M5 16H4C3 16 2 15.500 2 14V4C2 3 2.500 2 4 2H14C15.500 2 16 3 16 4V5" stroke="#a6a6a6" stroke-width="1.5"/></svg>
<svg class="b" style="left:1782px;top:764px;" width="26" height="26" viewBox="0 0 26 26" fill="none" stroke-linecap="round" stroke-linejoin="round"><circle cx="11.500" cy="11.500" r="9" stroke="#a6a6a6" stroke-width="1.6"/><path d="M18 18L24 24" stroke="#a6a6a6" stroke-width="1.6"/></svg>
<div class="b" style="left:661px;top:807.4px;width:1170px;height:26.4px;background:#3c3c31;"></div>
<span class="t" style="left:620px;top:806.5px;font-size:18px;color:#c8c8c8;font-family:'Liberation Mono',monospace;">1</span>
<span class="t" style="left:661px;top:806.5px;font-size:18px;color:#9cdcfe;font-family:'Liberation Mono',monospace;letter-spacing:-0.029px;">"Client created successfully in mulecraft"</span>
<div class="b" style="left:1112.7px;top:807.4px;width:3px;height:26.4px;background:#fff;"></div>
<div class="b" style="left:1810px;top:808px;width:1px;height:164px;background:#343434;"></div>
<div class="b" style="left:1811px;top:807px;width:20px;height:3px;background:#c8c8bc;"></div>
<div class="b" style="left:0px;top:983px;width:1892px;height:37px;background:#212121;"></div>
<div class="b" style="left:0px;top:983px;width:1892px;height:1px;background:#343434;"></div>
<svg class="b" style="left:3px;top:993px;" width="20" height="18" viewBox="0 0 20 18" fill="none" stroke-linecap="round" stroke-linejoin="round"><rect x="1.500" y="2" width="17" height="14" stroke="#a6a6a6" stroke-width="1.4"/><path d="M8.500 2V16M3.500 6H6.500M3.500 9H6.500M3.500 12H6.500" stroke="#a6a6a6" stroke-width="1.4"/></svg>
<svg class="b" style="left:42px;top:992px;" width="20" height="20" viewBox="0 0 20 20" fill="none" stroke-linecap="round" stroke-linejoin="round"><circle cx="10" cy="10" r="8.600" stroke="#a6a6a6" stroke-width="1.400"/><path d="M6 10.300L9 13L14 7.500" stroke="#a6a6a6" stroke-width="1.400"/></svg>
<span class="t" style="left:67px;top:986.5px;font-size:18px;color:#a6a6a6;letter-spacing:-0.606px;">Online</span>
<svg class="b" style="left:133px;top:992px;" width="20" height="20" viewBox="0 0 20 20" fill="none" stroke-linecap="round" stroke-linejoin="round"><circle cx="9" cy="9" r="7" stroke="#a6a6a6" stroke-width="1.400"/><path d="M14 14L18 18" stroke="#a6a6a6" stroke-width="1.400"/></svg>
<span class="t" style="left:158px;top:986.5px;font-size:18px;color:#a6a6a6;letter-spacing:-0.273px;">Find and replace</span>
<svg class="b" style="left:306px;top:993px;" width="18" height="18" viewBox="0 0 18 18" fill="none" stroke-linecap="round" stroke-linejoin="round"><rect x="1.500" y="1.500" width="15" height="15" stroke="#a6a6a6" stroke-width="1.300"/><path d="M1.500 5H16.500M4.500 8.500L7 10.500L4.500 12.500M8.500 13H12" stroke="#a6a6a6" stroke-width="1.300"/></svg>
<span class="t" style="left:330px;top:986.5px;font-size:18px;color:#a6a6a6;letter-spacing:-0.508px;">Console</span>
<svg class="b" style="left:1292px;top:992px;" width="20" height="20" viewBox="0 0 20 20" fill="none" stroke-linecap="round" stroke-linejoin="round"><circle cx="11" cy="11.500" r="7" stroke="#c5a5e8" stroke-width="1.500"/><path d="M7 11C8 14 12 15 14.500 12.500M4 2V6M2 4H6" stroke="#c5a5e8" stroke-width="1.500"/></svg>
<span class="t" style="left:1317px;top:986.5px;font-size:18px;color:#c5a5e8;letter-spacing:-0.008px;">Postbot</span>
<svg class="b" style="left:1402px;top:993px;" width="18" height="18" viewBox="0 0 18 18" fill="none" stroke-linecap="round" stroke-linejoin="round"><rect x="1.500" y="1.500" width="15" height="15" stroke="#a6a6a6" stroke-width="1.300"/><path d="M7.300 6V12L12 9Z" fill="#a6a6a6" stroke="#a6a6a6" stroke-width="0.800"/></svg>
<span class="t" style="left:1426px;top:986.5px;font-size:18px;color:#a6a6a6;letter-spacing:-0.609px;">Runner</span>
<svg class="b" style="left:1505px;top:992px;" width="20" height="20" viewBox="0 0 20 20" fill="none" stroke-linecap="round" stroke-linejoin="round"><path d="M4 8C2 12 5 17 10 16.500L4 8ZM7 12L11 8M9 3.500C12.500 3.500 15.500 6.500 15.500 10M9.500 1C14.500 1 18 5 18 9.500" stroke="#a6a6a6" stroke-width="1.400"/></svg>
<span class="t" style="left:1530px;top:986.5px;font-size:18px;color:#a6a6a6;letter-spacing:-0.303px;">Start Proxy</span>
<svg class="b" style="left:1640px;top:992px;" width="20" height="20" viewBox="0 0 20 20" fill="none" stroke-linecap="round" stroke-linejoin="round"><path d="M10 1.500C5 1.500 1.500 5.500 1.500 10C1.500 15 5.500 18.500 10 18.500C15 18.500 18.500 14.500 18.500 10C16 10.500 14 9 14 6.500C11.500 6.500 10 4.500 10 1.500Z" stroke="#a6a6a6" stroke-width="1.400"/><circle cx="7" cy="8" r="1" fill="#a6a6a6" stroke="none"/><circle cx="8" cy="13" r="1" fill="#a6a6a6" stroke="none"/><circle cx="13" cy="13" r="1" fill="#a6a6a6" stroke="none"/></svg>
<span class="t" style="left:1664px;top:986.5px;font-size:18px;color:#a6a6a6;letter-spacing:-0.172px;">Cookies</span>
<svg class="b" style="left:1752px;top:992px;" width="18" height="20" viewBox="0 0 18 20" fill="none" stroke-linecap="round" stroke-linejoin="round"><path d="M1.500 4.500H16.500M6 4.500V1.500H12V4.500M3.500 4.500V18.500H14.500V4.500M7 8V15M11 8V15" stroke="#a6a6a6" stroke-width="1.400"/></svg>
<span class="t" style="left:1776px;top:986.5px;font-size:18px;color:#a6a6a6;letter-spacing:-0.586px;">Trash</span>
<svg class="b" style="left:1843px;top:993px;" width="18" height="18" viewBox="0 0 18 18" fill="none" stroke-linecap="round" stroke-linejoin="round"><rect x="1.500" y="1.500" width="15" height="15" rx="1" stroke="#a6a6a6" stroke-width="1.400"/><path d="M9 1.500V16.500" stroke="#a6a6a6" stroke-width="1.400"/><rect x="4.500" y="8" width="2" height="2" fill="#a6a6a6" stroke="none"/><rect x="11.500" y="8" width="2" height="2" fill="#a6a6a6" stroke="none"/></svg>
<svg class="b" style="left:1883px;top:992px;" width="20" height="20" viewBox="0 0 20 20" fill="none" stroke-linecap="round" stroke-linejoin="round"><circle cx="10" cy="10" r="8" stroke="#a6a6a6" stroke-width="1.400"/></svg>
<div class="b" style="left:0;top:1020px;width:1892px;height:19px;background:linear-gradient(90deg,#223f4a 0%,#223c48 30%,#203644 55%,#1d2e40 75%,#1b2840 100%)"></div>
<div class="b" style="left:1269px;top:1020px;width:67px;height:19px;background:#4b5b67;"></div>
<div class="b" style="left:67px;top:1020px;width:432px;height:19px;background:#f1f1f1;border:1px solid #bdbdbd;border-right:none;border-bottom:none;"></div>
<div class="b" style="left:388px;top:1024px;width:42px;height:42px;background:#9fd0d8;border-radius:50%;background:radial-gradient(circle at 40% 30%,#c4e6ea,#8cc3cc 70%);"></div>
<div class="b" style="left:431px;top:1026px;width:28px;height:9px;border-radius:50%;background:#8d8272;transform:rotate(14deg)"></div>
<div class="b" style="left:437px;top:1026.500px;width:16px;height:4px;border-radius:50%;background:#d9cdb8;transform:rotate(14deg)"></div>
<svg class="b" style="left:484px;top:1032px;" width="8" height="8" viewBox="0 0 8 8" fill="none" stroke-linecap="round" stroke-linejoin="round"><path d="M4 0L6.500 8H1.500Z" fill="#9fd0d8"/></svg>
<div class="b" style="left:37px;top:1038px;width:5px;height:1px;background:#ddd;"></div>
<div class="b" style="left:98px;top:1038px;width:6px;height:1px;background:#333;"></div>
<div class="b" style="left:522px;top:1038px;width:2px;height:1px;background:#ccc;"></div>
<div class="b" style="left:531px;top:1038px;width:2px;height:1px;background:#ccc;"></div>
<div class="b" style="left:540px;top:1038px;width:2px;height:1px;background:#ccc;"></div>
<div class="b" style="left:545px;top:1038px;width:2px;height:1px;background:#ccc;"></div>
<div class="b" style="left:595px;top:1031.5px;width:30px;height:30px;background:#2aa7c9;border-radius:50%;background:linear-gradient(100deg,#3ccfb4,#1f8fd6);"></div>
<div class="b" style="left:664px;top:1037.5px;width:14px;height:3px;background:#e8a33a;border-radius:2px 2px 0 0;"></div>
<div class="b" style="left:740px;top:1033px;width:19px;height:8px;border:2px solid #29a8e0;border-radius:2px 2px 0 0;"></div>
<div class="b" style="left:732px;top:1037.5px;width:35px;height:3px;background:#f4f4f4;"></div>
<svg class="b" style="left:806px;top:1033px;" width="26" height="7" viewBox="0 0 26 7" fill="none" stroke-linecap="round" stroke-linejoin="round"><path d="M13 0L26 7H0Z" fill="#0a5fb4"/></svg>
<div class="b" style="left:870.5px;top:1033.5px;width:35px;height:10px;background:#1e6fd0;border:2px solid #f4f4f4;border-radius:4px;"></div>
<div class="b" style="left:941.0px;top:1031.5px;width:31.0px;height:31.0px;background:#e8311a;border-radius:50%;"></div>
<div class="b" style="left:950px;top:1036.5px;width:13px;height:3px;background:#f4d9d4;border-radius:1px;"></div>
<div class="b" style="left:1008px;top:1032.2px;width:36px;height:10px;background:#1889b8;border-radius:4px 4px 0 0;"></div>
<svg class="b" style="left:1020px;top:1036px;" width="12" height="3" viewBox="0 0 12 3" fill="none" stroke-linecap="round" stroke-linejoin="round"><path d="M6 0L12 3H0Z" fill="#3fb4e6"/></svg>
<div class="b" style="left:1079.0px;top:1031.5px;width:31.0px;height:31.0px;background:#e0352b;border-radius:50%;"></div>
<div class="b" style="left:1148.5px;top:1031.5px;width:31.0px;height:31.0px;background:#e0352b;border-radius:50%;"></div>
<div class="b" style="left:1216px;top:1035px;width:20px;height:4px;background:#f1f1f1;"></div>
<svg class="b" style="left:1242px;top:1033px;" width="10" height="6" viewBox="0 0 10 6" fill="none" stroke-linecap="round" stroke-linejoin="round"><path d="M2 6L7 0L9 1L5 6Z" fill="#e89a3a"/></svg>
<div class="b" style="left:1287.0px;top:1032.0px;width:29.0px;height:29.0px;background:#f26b3a;border-radius:50%;"></div>
<div class="b" style="left:1394.5px;top:1033px;width:16px;height:16px;background:#d8342c;border-radius:50%;"></div>
<div class="b" style="left:1386px;top:1036px;width:9px;height:3px;background:#7f93b0;"></div>
<div class="b" style="left:1593px;top:1038px;width:5px;height:1px;background:#e8e8e8;"></div>
<span class="t" style="left:1687.5px;top:1023.0px;font-size:17.5px;color:#fff;letter-spacing:-2.219px;">ENG</span>
<span class="t" style="left:1745px;top:1022.5px;font-size:18px;color:#fff;letter-spacing:-0.152px;">10:33 AM</span>
<div class="b" style="left:1853px;top:1038px;width:24px;height:1px;background:#f1f1f1;"></div>
</body></html>
